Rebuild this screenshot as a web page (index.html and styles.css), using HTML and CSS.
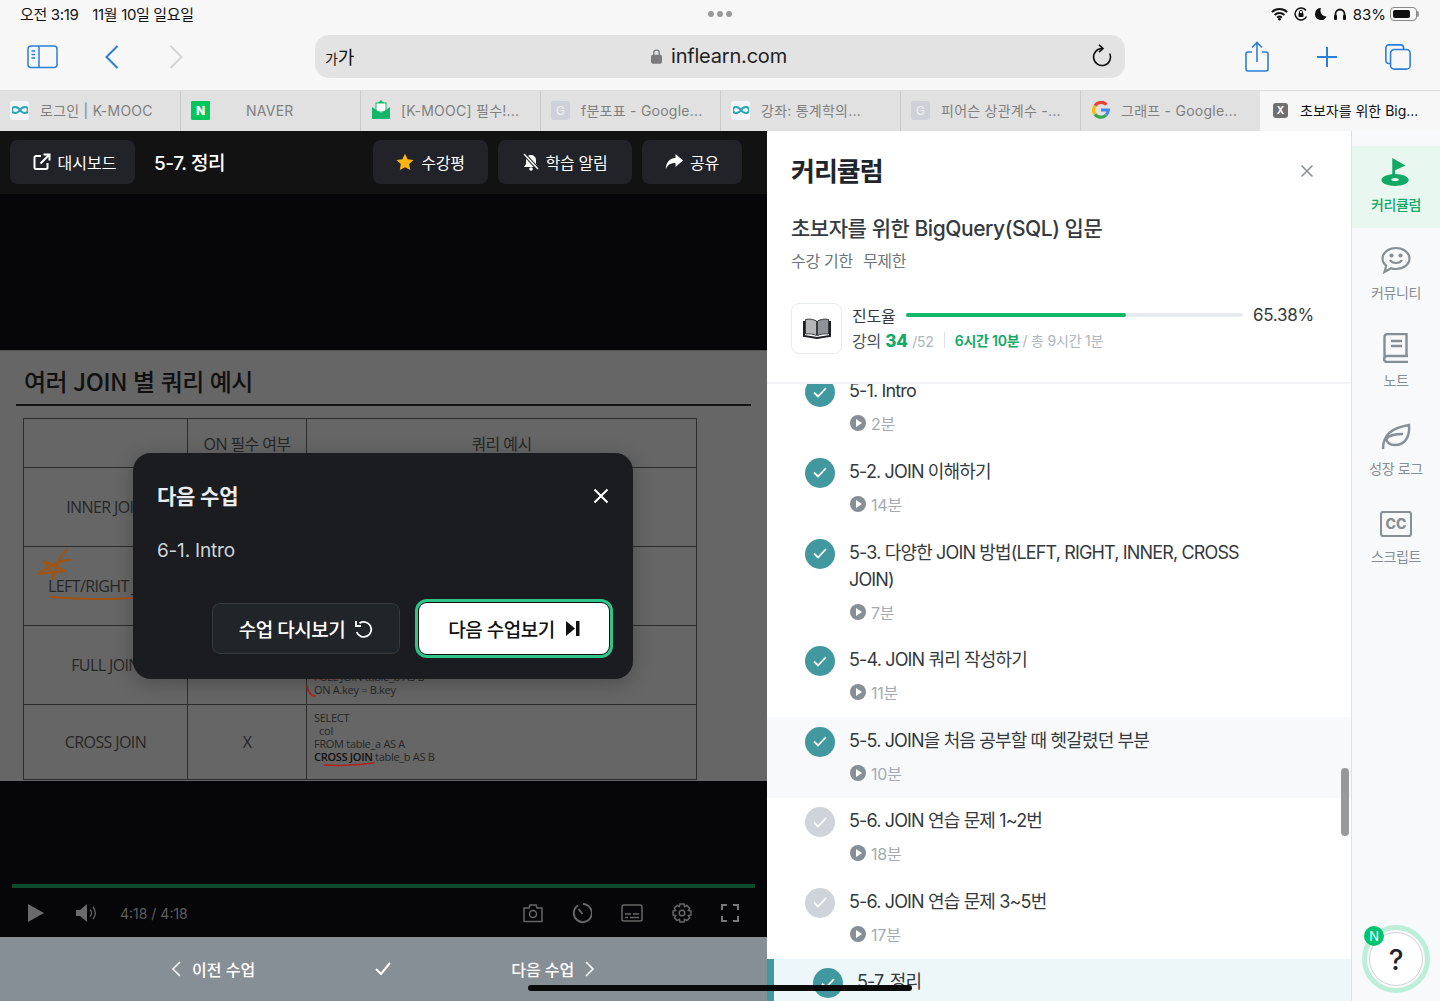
FILE: index.html
```html
<!DOCTYPE html>
<html lang="ko">

<head>
    <meta charset="UTF-8">
    <meta name="viewport" content="width=device-width, initial-scale=1.0">
    <title>초보자를 위한 BigQuery(SQL) 입문</title>
    <link rel="stylesheet" href="styles.css">
</head>

<body>
    <div class="statusbar">
        <div class="status-left"><span>오전 3:19</span><span>11월 10일 일요일</span></div>
        <div class="status-dots"><i></i><i></i><i></i></div>
        <div class="status-right">
            <svg width="17" height="14" viewBox="0 0 18 14"><path d="M1 5a11.500 11.500 0 0 1 16 0M3.800 8a7.500 7.500 0 0 1 10.400 0M6.500 10.800a3.600 3.600 0 0 1 5 0" fill="none" stroke="#111" stroke-width="2"/><circle cx="9" cy="12.500" r="1.500" fill="#111"/></svg>
            <svg width="14" height="14" viewBox="0 0 14 14"><path d="M12.500 9.500A6 6 0 1 1 12 3.500" fill="none" stroke="#111" stroke-width="1.500"/><rect x="4.500" y="6" width="5" height="4" rx=".8" fill="#111"/><path d="M5.500 6V4.800a1.500 1.500 0 0 1 3 0V6" fill="none" stroke="#111"/></svg>
            <svg width="13" height="14" viewBox="0 0 13 14"><path d="M7 1a6 6 0 1 0 5.500 8.500A6 6 0 0 1 7 1z" fill="#111"/></svg>
            <svg width="14" height="14" viewBox="0 0 14 14"><path d="M2.500 12V7a4.500 4.500 0 0 1 9 0v5" fill="none" stroke="#111" stroke-width="1.800"/><rect x="1" y="8" width="3" height="5" rx="1" fill="#111"/><rect x="10" y="8" width="3" height="5" rx="1" fill="#111"/></svg>
            <span class="battery-text">83%</span>
            <span class="battery"><i></i></span>
        </div>
    </div>

    <div class="toolbar">
        <div class="tool-group tool-left">
            <svg width="32" height="24" viewBox="0 0 32 24" fill="none" stroke="#2b7fd8" stroke-width="1.500"><rect x="1" y="1" width="29" height="21.500" rx="3"/><path d="M12 1v21.500M4.500 6H8M4.500 9.500H8M4.500 13H8"/></svg>
            <svg class="back" width="16" height="26" viewBox="0 0 16 26" fill="none" stroke="#2b7fd8" stroke-width="2"><path d="M13.500 2 2.500 13l11 11"/></svg>
            <svg class="forward" width="16" height="26" viewBox="0 0 16 26" fill="none" stroke="#d4d4d4" stroke-width="2"><path d="M2.500 2l11 11-11 11"/></svg>
        </div>
        <div class="address">
            <span class="aa"><small>가</small>가</span>
            <span class="domain">
                <svg width="11" height="15" viewBox="0 0 12 16"><rect y="6" width="12" height="10" rx="2" fill="#7b7b7b"/><path d="M3 7V4a3 3 0 0 1 6 0v3" fill="none" stroke="#7b7b7b" stroke-width="1.500"/></svg>
                inflearn.com
            </span>
            <svg class="reload" width="22" height="24" viewBox="0 0 22 24" fill="none" stroke="#111" stroke-width="1.600"><path d="M11 4.500A8.500 8.500 0 1 0 18.800 9.500"/><path d="M8 .8l4 3.700-4 3.700"/></svg>
        </div>
        <div class="tool-group tool-right">
            <svg width="26" height="32" viewBox="0 0 26 32" fill="none" stroke="#2b7fd8" stroke-width="1.600"><path d="M8 11H4a2 2 0 0 0-2 2v15a2 2 0 0 0 2 2h18a2 2 0 0 0 2-2V13a2 2 0 0 0-2-2h-4M13 21V2M8 6.500 13 1.500l5 5"/></svg>
            <svg width="24" height="24" viewBox="0 0 24 24" fill="none" stroke="#2b7fd8" stroke-width="2"><path d="M12 2v20M2 12h20"/></svg>
            <svg width="28" height="28" viewBox="0 0 30 30" fill="none" stroke="#2b7fd8" stroke-width="1.700"><rect x="7" y="7" width="21" height="21" rx="4"/><path d="M7 22H5a3 3 0 0 1-3-3V5a3 3 0 0 1 3-3h13a3 3 0 0 1 3 3v2"/></svg>
        </div>
    </div>

    <div class="tabbar">
        <div class="tab"><span class="favicon fav-light"><svg width="16" height="8" viewBox="0 0 16 8" fill="none" stroke="#2aa6b5" stroke-width="2"><path d="M8 4C6 1 4 1 3 1a3 3 0 0 0 0 6c1 0 3 0 5-3s4-3 5-3a3 3 0 0 1 0 6c-1 0-3 0-5-3z"/></svg></span>로그인 | K-MOOC</div>
        <div class="tab"><span class="favicon fav-naver">N</span><span class="naver-name">NAVER</span></div>
        <div class="tab"><span class="favicon"><svg width="18" height="20" viewBox="0 0 18 20"><path d="M9 0l4 4H5z" fill="#12b76a"/><rect x="4" y="3" width="10" height="9" fill="#fff" stroke="#12b76a"/><path d="M0 7l9 6 9-6v12H0z" fill="#12b76a"/></svg></span>[K-MOOC] 필수!...</div>
        <div class="tab"><span class="favicon fav-gray">G</span>f분포표 - Google...</div>
        <div class="tab"><span class="favicon fav-light"><svg width="16" height="8" viewBox="0 0 16 8" fill="none" stroke="#2aa6b5" stroke-width="2"><path d="M8 4C6 1 4 1 3 1a3 3 0 0 0 0 6c1 0 3 0 5-3s4-3 5-3a3 3 0 0 1 0 6c-1 0-3 0-5-3z"/></svg></span>강좌: 통계학의...</div>
        <div class="tab"><span class="favicon fav-gray">G</span>피어슨 상관계수 -...</div>
        <div class="tab tab-google"><span class="favicon"><svg width="18" height="18" viewBox="0 0 18 18" fill="none" stroke-width="3.200"><path d="M14.500 3.700A7.300 7.300 0 0 0 3 4.800" stroke="#ea4335"/><path d="M3 4.800a7.300 7.300 0 0 0 0 8.400" stroke="#fbbc05"/><path d="M3 13.200a7.300 7.300 0 0 0 11 1" stroke="#34a853"/><path d="M14 14.200A7.300 7.300 0 0 0 16.300 9H9" stroke="#4285f4"/></svg></span>그래프 - Google...</div>
        <div class="tab tab-active"><span class="favicon fav-x">X</span>초보자를 위한 Big...</div>
    </div>

    <div class="main">
        <div class="player">
            <div class="player-top">
                <button class="dark-btn btn-dashboard">
                    <svg width="18" height="18" viewBox="0 0 18 18" fill="none" stroke="#fff" stroke-width="2"><path d="M8 3H3a1.500 1.500 0 0 0-1.500 1.500v10A1.500 1.500 0 0 0 3 16h10a1.500 1.500 0 0 0 1.500-1.500V10M7.500 10.500 16 2M10.500 1.500H16.500V7.500"/></svg>
                    대시보드
                </button>
                <div class="unit-title">5-7. 정리</div>
                <button class="dark-btn btn-review">
                    <svg width="18" height="18" viewBox="0 0 18 18"><path d="M9 .8l2.600 5.400 5.900.8-4.300 4.100 1 5.900L9 14.200 3.800 17l1-5.900L.5 7l5.900-.8z" fill="#fcb614"/></svg>
                    수강평
                </button>
                <button class="dark-btn btn-alarm">
                    <svg width="16" height="18" viewBox="0 0 16 18"><path d="M8 2a5 5 0 0 1 5 5v4l2 3H1l2-3V7a5 5 0 0 1 5-5z" fill="#fff"/><circle cx="8" cy="16" r="1.800" fill="#fff"/><path d="M1 1l14 15" stroke="#212329" stroke-width="3.500"/><path d="M1 1l14 15" stroke="#fff" stroke-width="1.500"/></svg>
                    학습 알림
                </button>
                <button class="dark-btn btn-share">
                    <svg width="18" height="16" viewBox="0 0 18 16"><path d="M10.500 0 18 6.500 10.500 13V9C6 9 3 10.500 .8 15 1 9 4 4.500 10.500 4z" fill="#fff"/></svg>
                    공유
                </button>
            </div>

            <div class="video">
                <div class="slide">
                    <h2 class="slide-title">여러 JOIN 별 쿼리 예시</h2>
                    <table class="slide-table">
                        <tr class="row-head">
                            <td class="col-a"></td>
                            <td class="col-b">ON 필수 여부</td>
                            <td class="col-c center">쿼리 예시</td>
                        </tr>
                        <tr class="row-inner">
                            <td>INNER JOIN</td>
                            <td>O</td>
                            <td class="query"></td>
                        </tr>
                        <tr class="row-left">
                            <td><span class="left-name">LEFT/RIGHT JOIN</span></td>
                            <td>O</td>
                            <td class="query"></td>
                        </tr>
                        <tr class="row-full">
                            <td>FULL JOIN</td>
                            <td>O</td>
                            <td class="query query-low">FULL JOIN table_b AS B<br>ON A.key = B.key</td>
                        </tr>
                        <tr class="row-cross">
                            <td>CROSS JOIN</td>
                            <td>X</td>
                            <td class="query query-cross">SELECT<br>&nbsp;&nbsp;col<br>FROM table_a AS A<br><b>CROSS JOIN</b> table_b AS B</td>
                        </tr>
                    </table>
                    <svg class="ink" width="767" height="431" viewBox="0 0 767 431" fill="none" stroke-linecap="round" stroke-linejoin="round">
                        <path d="M67 198C60 205 56 215 53 228M70 209C60 209 50 215 38 223L65 220 44 210 55 227" stroke="#a0540f" stroke-width="2"/>
                        <path d="M50 246c25 2 55 3 85 1" stroke="#a0540f" stroke-width="1.800"/>
                        <path d="M314 327h25" stroke="#b3201c" stroke-width="2.500"/>
                        <path d="M307 335c1 5 3 10 8 10" stroke="#b3201c" stroke-width="1.500"/>
                        <path d="M324 414c18 1 36 0 50-2" stroke="#b3201c" stroke-width="1.500"/>
                    </svg>
                </div>

                <div class="controls">
                    <div class="progress-line"></div>
                    <div class="control-row">
                        <svg width="16" height="18" viewBox="0 0 16 18"><path d="M0 0l16 9-16 9z" fill="#6a6a6a"/></svg>
                        <svg class="volume" width="22" height="18" viewBox="0 0 22 18" fill="none"><path d="M0 6h4l7-6v18l-7-6H0z" fill="#6a6a6a"/><path d="M14 5.500a5 5 0 0 1 0 7M17 3a9 9 0 0 1 0 12" stroke="#6a6a6a" stroke-width="1.300"/></svg>
                        <span class="time">4:18 / 4:18</span>
                        <span class="control-gap"></span>
                        <svg width="20" height="20" viewBox="0 0 20 20" fill="none" stroke="#666" stroke-width="1.500"><path d="M1 5h5l1-3h6l1 3h5v13.500H1z"/><circle cx="10" cy="11" r="3.500"/></svg>
                        <svg width="20" height="22" viewBox="0 0 20 22" fill="none" stroke="#666" stroke-width="2"><path d="M6 3.500a9 9 0 1 0 5-1.400M6.500 7l4 5"/></svg>
                        <svg width="22" height="18" viewBox="0 0 22 18" fill="none" stroke="#666" stroke-width="1.500"><rect x="1" y="1" width="20" height="16" rx="2"/><path d="M4 10h6M12 10h6M4 13.500h3M9 13.500h9"/></svg>
                        <svg width="20" height="20" viewBox="0 0 20 20" fill="none" stroke="#666" stroke-width="1.500"><path d="M8 1h4l.6 2.600 2.300-1.200 2.700 2.800-1.300 2.200 2.700.6v4l-2.700.6 1.300 2.200-2.700 2.800-2.300-1.200L12 19H8l-.6-2.600-2.300 1.200-2.700-2.800 1.300-2.200L1 12V8l2.700-.6-1.300-2.200 2.700-2.800 2.300 1.200z"/><circle cx="10" cy="10" r="2.800"/></svg>
                        <svg width="18" height="18" viewBox="0 0 18 18" fill="none" stroke="#777" stroke-width="2"><path d="M1 6V1h5M12 1h5v5M17 12v5h-5M6 17H1v-5"/></svg>
                    </div>
                </div>

                <div class="next-modal">
                    <div class="modal-head">
                        <div class="modal-title">다음 수업</div>
                        <svg width="16" height="16" viewBox="0 0 16 16" stroke="#fff" stroke-width="2"><path d="M1.500 1.500l13 13M14.500 1.500l-13 13"/></svg>
                    </div>
                    <div class="modal-next-name">6-1. Intro</div>
                    <div class="modal-actions">
                        <button class="replay-btn">수업 다시보기
                            <svg width="20" height="20" viewBox="0 0 20 20" fill="none" stroke="#fff" stroke-width="1.800"><path d="M6 4.200a7.500 7.500 0 1 1-2.800 8.800M2.500 2v5h5" transform="translate(.5 0)"/></svg>
                        </button>
                        <button class="next-btn">다음 수업보기
                            <svg width="14" height="15" viewBox="0 0 14 15"><path d="M0 0l9 7.500L0 15z" fill="#111"/><rect x="10" width="3.500" height="15" fill="#111"/></svg>
                        </button>
                    </div>
                </div>
            </div>

            <div class="lesson-nav">
                <span class="nav-item nav-prev">
                    <svg width="10" height="16" viewBox="0 0 10 16" fill="none" stroke="#fff" stroke-width="1.600"><path d="M9 1 2 8l7 7"/></svg>
                    이전 수업
                </span>
                <svg class="nav-check" width="16" height="13" viewBox="0 0 16 13" fill="none" stroke="#fff" stroke-width="2"><path d="M1 7l5 5 9-11"/></svg>
                <span class="nav-item nav-next">
                    다음 수업
                    <svg width="10" height="16" viewBox="0 0 10 16" fill="none" stroke="#fff" stroke-width="1.600"><path d="M1 1l7 7-7 7"/></svg>
                </span>
            </div>
        </div>

        <div class="curriculum">
            <div class="curriculum-head">
                <div class="head-row">
                    <h1>커리큘럼</h1>
                    <svg width="14" height="14" viewBox="0 0 14 14" stroke="#868e96" stroke-width="1.500"><path d="M1.500 1.500l11 11M12.500 1.500l-11 11"/></svg>
                </div>
                <div class="course-name">초보자를 위한 BigQuery(SQL) 입문</div>
                <div class="course-term"><span>수강 기한</span><span>무제한</span></div>
                <div class="progress-box">
                    <div class="book-box">
                        <svg width="28" height="21" viewBox="0 0 28 21"><path d="M1 3v15l13 2 13-2V3" fill="none" stroke="#1d1f22" stroke-width="2"/><path d="M2.500 1.500c4-1 8 0 11 1.500v14.500c-3-1.500-7-2-11-1.500z" fill="#b4b6b8" stroke="#3a3d40"/><path d="M25.500 1.500c-4-1-8 0-11 1.500v14.500c3-1.500 7-2 11-1.500z" fill="#8f9296" stroke="#3a3d40"/></svg>
                    </div>
                    <div class="progress-info">
                        <div class="progress-top">
                            <span class="progress-label">진도율</span>
                            <div class="progress-track"><div class="progress-fill" style="width: 65.38%"></div></div>
                            <span class="progress-pct">65.38%</span>
                        </div>
                        <div class="progress-bottom">
                            <span>강의 <b class="green-count">34</b> <small class="gray">/52</small></span>
                            <i class="divider"></i>
                            <span class="green-time">6시간 10분</span>
                            <small class="gray">/ 총 9시간 1분</small>
                        </div>
                    </div>
                </div>
            </div>

            <div class="lessons">
                <div class="lesson lesson-first">
                    <span class="check done"><svg width="14" height="11" viewBox="0 0 14 11" fill="none" stroke="#fff" stroke-width="1.800"><path d="M1 5.500l4 4 8-8.500"/></svg></span>
                    <div class="lesson-body"><div class="lesson-title">5-1. Intro</div><div class="lesson-time"><span class="play"></span>2분</div></div>
                </div>
                <div class="lesson">
                    <span class="check done"><svg width="14" height="11" viewBox="0 0 14 11" fill="none" stroke="#fff" stroke-width="1.800"><path d="M1 5.500l4 4 8-8.500"/></svg></span>
                    <div class="lesson-body"><div class="lesson-title">5-2. JOIN 이해하기</div><div class="lesson-time"><span class="play"></span>14분</div></div>
                </div>
                <div class="lesson">
                    <span class="check done"><svg width="14" height="11" viewBox="0 0 14 11" fill="none" stroke="#fff" stroke-width="1.800"><path d="M1 5.500l4 4 8-8.500"/></svg></span>
                    <div class="lesson-body"><div class="lesson-title">5-3. 다양한 JOIN 방법(LEFT, RIGHT, INNER, CROSS JOIN)</div><div class="lesson-time"><span class="play"></span>7분</div></div>
                </div>
                <div class="lesson">
                    <span class="check done"><svg width="14" height="11" viewBox="0 0 14 11" fill="none" stroke="#fff" stroke-width="1.800"><path d="M1 5.500l4 4 8-8.500"/></svg></span>
                    <div class="lesson-body"><div class="lesson-title">5-4. JOIN 쿼리 작성하기</div><div class="lesson-time"><span class="play"></span>11분</div></div>
                </div>
                <div class="lesson lesson-shade">
                    <span class="check done"><svg width="14" height="11" viewBox="0 0 14 11" fill="none" stroke="#fff" stroke-width="1.800"><path d="M1 5.500l4 4 8-8.500"/></svg></span>
                    <div class="lesson-body"><div class="lesson-title">5-5. JOIN을 처음 공부할 때 헷갈렸던 부분</div><div class="lesson-time"><span class="play"></span>10분</div></div>
                </div>
                <div class="lesson">
                    <span class="check todo"><svg width="14" height="11" viewBox="0 0 14 11" fill="none" stroke="#fff" stroke-width="1.800"><path d="M1 5.500l4 4 8-8.500"/></svg></span>
                    <div class="lesson-body"><div class="lesson-title">5-6. JOIN 연습 문제 1~2번</div><div class="lesson-time"><span class="play"></span>18분</div></div>
                </div>
                <div class="lesson">
                    <span class="check todo"><svg width="14" height="11" viewBox="0 0 14 11" fill="none" stroke="#fff" stroke-width="1.800"><path d="M1 5.500l4 4 8-8.500"/></svg></span>
                    <div class="lesson-body"><div class="lesson-title">5-6. JOIN 연습 문제 3~5번</div><div class="lesson-time"><span class="play"></span>17분</div></div>
                </div>
                <div class="lesson lesson-current">
                    <span class="check done"><svg width="14" height="11" viewBox="0 0 14 11" fill="none" stroke="#fff" stroke-width="1.800"><path d="M1 5.500l4 4 8-8.500"/></svg></span>
                    <div class="lesson-body"><div class="lesson-title">5-7. 정리</div></div>
                </div>
                <div class="scroll-thumb"></div>
            </div>
        </div>

        <div class="side">
            <div class="side-tab side-active">
                <svg width="32" height="32" viewBox="0 0 32 32"><path d="M12 1l14 8-11 5v8h-3z" fill="#12a865"/><ellipse cx="15" cy="24.500" rx="14.500" ry="6.500" fill="#12a865"/><ellipse cx="15" cy="24" rx="4" ry="1.700" fill="#e8f8f1"/></svg>
                <span>커리큘럼</span>
            </div>
            <div class="side-tab">
                <svg width="30" height="28" viewBox="0 0 30 28" fill="none" stroke="#868e96" stroke-width="2.200"><path d="M15 2c7.500 0 13.500 4.600 13.500 10.500S22.500 23 15 23c-1.800 0-3.600-.3-5-.8L3.500 26l1.700-6.300C2.800 17.800 1.500 15.300 1.500 12.500 1.500 6.600 7.500 2 15 2z"/><path d="M9 14c2.500 4 9.500 4 12 0"/><circle cx="10.500" cy="9.500" r="1" fill="#868e96"/><circle cx="19.500" cy="9.500" r="1" fill="#868e96"/></svg>
                <span>커뮤니티</span>
            </div>
            <div class="side-tab">
                <svg width="26" height="30" viewBox="0 0 26 30" fill="none" stroke="#868e96" stroke-width="2.400"><path d="M25 23H4a3 3 0 0 0 0 6h21M1.500 26V4a3 3 0 0 1 3-3h19v22"/><path d="M8 8h11M8 13h11"/></svg>
                <span>노트</span>
            </div>
            <div class="side-tab">
                <svg width="30" height="28" viewBox="0 0 30 28" fill="none" stroke="#868e96" stroke-width="2.400"><path d="M2 27c0-14 8-21 26-24 1 12-4 20-14 20-4 0-8-2-9-6 3-4 9-5 17-5"/></svg>
                <span>성장 로그</span>
            </div>
            <div class="side-tab">
                <span class="cc-icon">CC</span>
                <span>스크립트</span>
            </div>
            <div class="help">
                <span class="help-badge">N</span>
                <span class="help-inner">?</span>
            </div>
        </div>
    </div>

    <div class="home-bar"></div>
</body>

</html>
```

FILE: styles.css
```css
html,
body {
    margin: 0;
    height: 1001px;
    overflow: hidden;
}

body {
    width: 1440px;
    position: relative;
    display: flex;
    flex-direction: column;
    background-color: #f7f7f7;
    color: #212529;
    font-family: Inter, "Noto Sans CJK KR", sans-serif;
    letter-spacing: -0.2px;
}

svg {
    display: block;
    flex-shrink: 0;
}

/* ipad status bar */
.statusbar {
    height: 30px;
    padding: 0 20px 2px;
    box-sizing: border-box;
    display: flex;
    align-items: center;
    justify-content: space-between;
    font-size: 15px;
    letter-spacing: -0.35px;
    color: #111;
}

.status-left {
    display: flex;
    gap: 14px;
    width: 300px;
    margin-top: -1px;
}

.status-dots {
    display: flex;
    gap: 3px;
}

.status-dots i {
    width: 6px;
    height: 6px;
    border-radius: 50%;
    background-color: #9a9a9a;
}

.status-right {
    width: 300px;
    display: flex;
    justify-content: flex-end;
    align-items: center;
    gap: 6px;
}

.battery-text {
    font-size: 15px;
    letter-spacing: 0;
}

.battery {
    width: 27px;
    height: 14px;
    border: 1px solid #888;
    border-radius: 4px;
    padding: 2px;
    box-sizing: border-box;
    margin-left: -2px;
    margin-right: 3px;
    position: relative;
}

.battery::after {
    content: "";
    position: absolute;
    left: 26px;
    top: 3px;
    width: 2px;
    height: 6px;
    border-radius: 0 2px 2px 0;
    background-color: #999;
}

.battery i {
    display: block;
    width: 83%;
    height: 100%;
    border-radius: 2px;
    background-color: #111;
}

/* safari toolbar */
.toolbar {
    height: 60px;
    display: flex;
    align-items: flex-start;
    padding-top: 5px;
    box-sizing: border-box;
}

.tool-group {
    width: 315px;
    height: 43px;
    display: flex;
    align-items: center;
}

.tool-left {
    padding-left: 27px;
    box-sizing: border-box;
}

.back {
    margin-left: 45px;
}

.forward {
    margin-left: 48px;
}

.tool-right {
    padding-left: 119px;
    gap: 45px;
    box-sizing: border-box;
}

.address {
    width: 810px;
    height: 43px;
    padding: 0 12px 1px 10px;
    box-sizing: border-box;
    display: grid;
    grid-template-columns: 1fr auto 1fr;
    align-items: center;
    background-color: #e3e3e3;
    border-radius: 14px;
}

.aa {
    font-size: 18px;
    color: #111;
}

.aa small {
    font-size: 14px;
}

.domain {
    display: flex;
    align-items: center;
    gap: 9px;
    font-size: 20px;
    color: #222;
    letter-spacing: -0.2px;
}

.reload {
    justify-self: end;
}

/* safari tabs */
.tabbar {
    height: 41px;
    display: flex;
    border-top: 1px solid #dcdcdc;
    box-sizing: border-box;
}

.tab {
    width: 180px;
    padding-left: 10px;
    padding-bottom: 2px;
    box-sizing: border-box;
    display: flex;
    align-items: center;
    gap: 11px;
    background-color: #e1e1e1;
    border-right: 1px solid #c9c9c9;
    font-size: 14px;
    letter-spacing: 0.25px;
    color: #808080;
    white-space: nowrap;
}

.tab:first-child {
    width: 181px;
}

.tab-google {
    width: 179px;
    border-right: none;
}

.tab-active {
    background-color: #f7f7f7;
    color: #111;
    border-right: none;
    padding-left: 13px;
    gap: 12px;
    letter-spacing: 0;
}

.favicon {
    width: 19px;
    height: 19px;
    border-radius: 3px;
    display: flex;
    align-items: center;
    justify-content: center;
    flex-shrink: 0;
    font-size: 12px;
    letter-spacing: 0;
}

.fav-light {
    background-color: #f2f4f8;
}

.fav-naver {
    background-color: #03c75a;
    color: #fff;
    font-weight: 800;
    border-radius: 1px;
}

.naver-name {
    margin-left: 25px;
}

.fav-gray {
    background-color: #cfd1d8;
    color: #f2f2f2;
}

.fav-x {
    width: 15px;
    height: 15px;
    background-color: #707070;
    color: #fff;
    font-size: 10px;
    font-weight: 700;
}

/* main split */
.main {
    flex: 1;
    min-height: 0;
    display: flex;
}

.player {
    width: 767px;
    display: flex;
    flex-direction: column;
    background-color: #060609;
}

.player-top {
    height: 63px;
    padding: 9px 25px 10px 10px;
    box-sizing: border-box;
    display: flex;
    align-items: stretch;
    background-color: #121212;
    color: #fff;
}

.dark-btn {
    display: flex;
    align-items: center;
    justify-content: center;
    gap: 7px;
    border: none;
    border-radius: 8px;
    background-color: #212329;
    color: #fff;
    font-family: inherit;
    font-size: 16px;
    letter-spacing: -0.3px;
    padding: 0 0 1px;
}

.btn-dashboard {
    width: 125px;
    letter-spacing: 0;
    padding-left: 4px;
}

.unit-title {
    align-self: center;
    margin-left: 19px;
    margin-top: -2px;
    width: 219px;
    font-size: 19px;
    font-weight: 500;
    letter-spacing: -0.45px;
}

.btn-review {
    width: 115px;
}

.btn-alarm {
    width: 134px;
    margin-left: 10px;
}

.btn-share {
    width: 100px;
    margin-left: 10px;
}

.video {
    flex: 1;
    min-height: 0;
    position: relative;
    padding-top: 156px;
    display: flex;
    flex-direction: column;
    box-sizing: border-box;
}

.slide {
    height: 431px;
    position: relative;
    background-color: #666;
    color: #1d1d1d;
    border-top: 1px solid #555;
    box-sizing: border-box;
    padding: 14px 16px 0 16px;
}

.slide-title {
    margin: 0;
    padding: 0 0 7px 8px;
    height: 32px;
    border-bottom: 2px solid #141414;
    font-size: 24px;
    line-height: 32px;
    font-weight: 500;
    letter-spacing: -0.6px;
    color: #111;
    font-family: "Noto Sans CJK KR", sans-serif;
    box-sizing: content-box;
}

.slide-table {
    margin: 12px 0 0 7px;
    border-collapse: collapse;
    table-layout: fixed;
    width: 674px;
    font-family: "Open Sans", "Noto Sans CJK KR", sans-serif;
    font-size: 16px;
    letter-spacing: -0.6px;
    color: #262626;
}

.slide-table td {
    border: 1.500px solid #2c2c2c;
    padding: 0;
    text-align: center;
    vertical-align: middle;
}

.col-a {
    width: 163px;
}

.col-b {
    width: 118px;
}

.row-head {
    height: 49px;
}

.row-inner {
    height: 79px;
}

.row-left {
    height: 79px;
}

.row-full {
    height: 79px;
}

.row-cross {
    height: 75px;
}

.left-name {
    display: block;
    text-align: left;
    padding: 0 0 0 24px;
    white-space: nowrap;
}

.slide-table td.query {
    text-align: left;
    padding-left: 7px;
    font-size: 11px;
    line-height: 13px;
    letter-spacing: -0.3px;
}

.slide-table td.query-low {
    vertical-align: bottom;
    padding-bottom: 8px;
}

.slide-table td.query-cross {
    padding-bottom: 10px;
}

.slide-table b {
    font-weight: 600;
    color: #111;
}

.ink {
    position: absolute;
    left: 0;
    top: 0;
}

.controls {
    margin-top: auto;
    padding: 0 12px 13px;
}

.progress-line {
    height: 4px;
    background-color: #0c4a2e;
}

.control-row {
    height: 22px;
    margin-top: 14px;
    display: flex;
    align-items: center;
    padding: 0 16px 0 16px;
    gap: 29px;
}

.volume {
    margin-left: 3px;
}

.time {
    margin-left: -7px;
    font-size: 14px;
    color: #5f5f5f;
    letter-spacing: 0;
}

.control-gap {
    flex: 1;
}

/* next lesson dialog */
.next-modal {
    position: absolute;
    left: 133px;
    top: 259px;
    width: 500px;
    height: 226px;
    padding: 27px 24px 0;
    box-sizing: border-box;
    background-color: #1a1c20;
    border-radius: 18px;
    box-shadow: 0 4px 20px rgba(0, 0, 0, 0.25);
    color: #e9ecef;
}

.modal-head {
    height: 30px;
    display: flex;
    align-items: center;
    justify-content: space-between;
}

.modal-head svg {
    margin-top: 2px;
}

.modal-title {
    font-size: 21px;
    font-weight: 700;
    color: #e9ecef;
}

.modal-next-name {
    margin-top: 27px;
    font-size: 19px;
    line-height: 28px;
    color: #ced4da;
}

.modal-actions {
    margin-top: 38px;
    display: flex;
    justify-content: flex-end;
    gap: 19px;
}

.replay-btn,
.next-btn {
    height: 51px;
    display: flex;
    align-items: center;
    justify-content: center;
    gap: 8px;
    border-radius: 8px;
    font-family: inherit;
    font-size: 19px;
    font-weight: 500;
    letter-spacing: -0.5px;
    padding: 0;
}

.replay-btn {
    width: 188px;
    background-color: #212429;
    border: 1px solid #343a40;
    color: #fff;
}

.next-btn {
    width: 190px;
    background-color: #fff;
    border: none;
    color: #111;
    gap: 11px;
    box-shadow: 0 0 0 1px #0f1113, 0 0 0 4px #2fc48a;
}

.lesson-nav {
    height: 64px;
    flex-shrink: 0;
    display: flex;
    align-items: center;
    padding-bottom: 1px;
    box-sizing: border-box;
    background-color: #868e96;
    color: #fff;
    font-size: 16px;
    font-weight: 500;
    letter-spacing: 0;
}

.nav-item {
    display: flex;
    align-items: center;
    gap: 11px;
}

.nav-prev {
    margin-left: 171px;
}

.nav-check {
    margin-left: 120px;
}

.nav-next {
    margin-left: 120px;
}

/* curriculum panel */
.curriculum {
    width: 584px;
    position: relative;
    display: flex;
    flex-direction: column;
    background-color: #fff;
}

.curriculum-head {
    height: 253px;
    flex-shrink: 0;
    padding: 18px 36px 0 24px;
    box-sizing: border-box;
    border-bottom: 2px solid #f1f3f5;
}

.head-row {
    height: 40px;
    display: flex;
    align-items: center;
    justify-content: space-between;
}

.head-row svg {
    margin-right: 1px;
    margin-top: 4px;
}

.head-row h1 {
    margin: 0;
    font-size: 26px;
    font-weight: 700;
    letter-spacing: -1px;
    color: #212529;
}

.course-name {
    margin-top: 25px;
    font-size: 21px;
    line-height: 30px;
    font-weight: 500;
    letter-spacing: -0.45px;
    color: #343a40;
}

.course-term {
    margin-top: 5px;
    display: flex;
    gap: 10px;
    font-size: 16px;
    letter-spacing: -0.3px;
    line-height: 24px;
    color: #6e757c;
}

.progress-box {
    margin-top: 30px;
    display: flex;
    gap: 10px;
}

.book-box {
    width: 51px;
    height: 51px;
    flex-shrink: 0;
    border: 1px solid #e9ecef;
    border-radius: 8px;
    box-sizing: border-box;
    display: flex;
    align-items: center;
    justify-content: center;
}

.progress-info {
    flex: 1;
}

.progress-top {
    height: 24px;
    display: flex;
    align-items: center;
    font-size: 16px;
    color: #343a40;
}

.progress-label {
    width: 44px;
    flex-shrink: 0;
    white-space: nowrap;
}

.progress-track {
    width: 337px;
    height: 4px;
    margin: 0 10px;
    flex-shrink: 0;
    background-color: #e9ecef;
    border-radius: 2px;
}

.progress-fill {
    height: 100%;
    background-color: #12b76a;
    border-radius: 2px;
}

.progress-pct {
    font-size: 17px;
    letter-spacing: -0.3px;
    white-space: nowrap;
}

.progress-bottom {
    margin-top: 1px;
    height: 24px;
    display: flex;
    align-items: center;
    font-size: 16px;
    color: #495057;
}

.green-count {
    color: #12a865;
    font-size: 17px;
    font-weight: 800;
}

.gray {
    font-size: 14px;
    color: #adb5bd;
}

.divider {
    width: 1px;
    height: 16px;
    margin: 0 10px;
    background-color: #dee2e6;
}

.green-time {
    margin-right: 3px;
    font-size: 14px;
    font-weight: 600;
    color: #12a865;
}

.lessons {
    flex: 1;
    min-height: 0;
    overflow: hidden;
    position: relative;
}

.lesson {
    display: flex;
    padding: 9.400px 90px 15.200px 38px;
    background-color: #fff;
}

.lesson-first {
    margin-top: -16px;
}

.lesson-shade {
    background-color: #f8f9fa;
}

.lesson-current {
    background-color: #edf7fa;
    border-left: 7px solid #41999f;
    padding-left: 39px;
}

.check {
    width: 30px;
    height: 30px;
    border-radius: 50%;
    flex-shrink: 0;
    display: flex;
    align-items: center;
    justify-content: center;
}

.check.done {
    background-color: #41999f;
}

.check.todo {
    background-color: #ced4da;
}

.lesson-body {
    margin-left: 14px;
}

.lesson-title {
    font-size: 18px;
    line-height: 27px;
    letter-spacing: -0.85px;
    color: #343a40;
}

.lesson-time {
    margin-top: 9px;
    height: 20px;
    display: flex;
    align-items: center;
    gap: 5px;
    font-size: 16px;
    color: #a4abb2;
}

.play {
    width: 16px;
    height: 16px;
    margin-left: 1px;
    border-radius: 50%;
    background-color: #868e96;
    position: relative;
}

.play::after {
    content: "";
    position: absolute;
    left: 6px;
    top: 4px;
    border-left: 6px solid #fff;
    border-top: 4px solid transparent;
    border-bottom: 4px solid transparent;
}

.scroll-thumb {
    position: absolute;
    left: 574px;
    top: 384px;
    width: 8px;
    height: 68px;
    border-radius: 4px;
    background-color: #999;
}

/* right icon rail */
.side {
    flex: 1;
    position: relative;
    padding-top: 15px;
    box-sizing: border-box;
    display: flex;
    flex-direction: column;
    gap: 6px;
    border-left: 1px solid #dee2e6;
    background-color: #f8f9fa;
}

.side-tab {
    height: 82px;
    padding-top: 11px;
    box-sizing: border-box;
    display: flex;
    flex-direction: column;
    align-items: center;
    justify-content: flex-start;
    font-size: 14px;
    color: #868e96;
    letter-spacing: -0.4px;
}

.side-tab svg,
.cc-icon {
    height: 30px;
    margin-bottom: 8px;
}

.side-tab span:last-child {
    line-height: 20px;
}

.side-active {
    background-color: #e8f8f1;
    color: #12a865;
    font-weight: 500;
}

.cc-icon {
    width: 32px;
    height: 26px;
    margin-top: 2px;
    margin-bottom: 10px;
    border: 2.500px solid #868e96;
    border-radius: 3px;
    box-sizing: border-box;
    font-size: 14px;
    line-height: 21px !important;
    font-weight: 800;
    text-align: center;
    letter-spacing: 0;
    color: #868e96;
}

.help {
    position: absolute;
    left: 10px;
    top: 794px;
    width: 68px;
    height: 68px;
    border-radius: 50%;
    border: 5px solid #bdeeda;
    box-sizing: border-box;
    padding: 2px;
}

.help-inner {
    display: block;
    height: 100%;
    border: 1px solid #ced4da;
    border-radius: 50%;
    box-sizing: border-box;
    background-color: #fff;
    font-size: 28px;
    line-height: 54px;
    font-weight: 500;
    text-align: center;
    color: #212529;
}

.help-badge {
    position: absolute;
    left: -3px;
    top: -4px;
    width: 20px;
    height: 20px;
    border-radius: 50%;
    background-color: #00c471;
    color: #fff;
    font-size: 13px;
    line-height: 20px;
    text-align: center;
}

.home-bar {
    position: absolute;
    left: 528px;
    top: 985px;
    width: 384px;
    height: 6px;
    border-radius: 3px;
    background-color: #0b0b0b;
}
```
